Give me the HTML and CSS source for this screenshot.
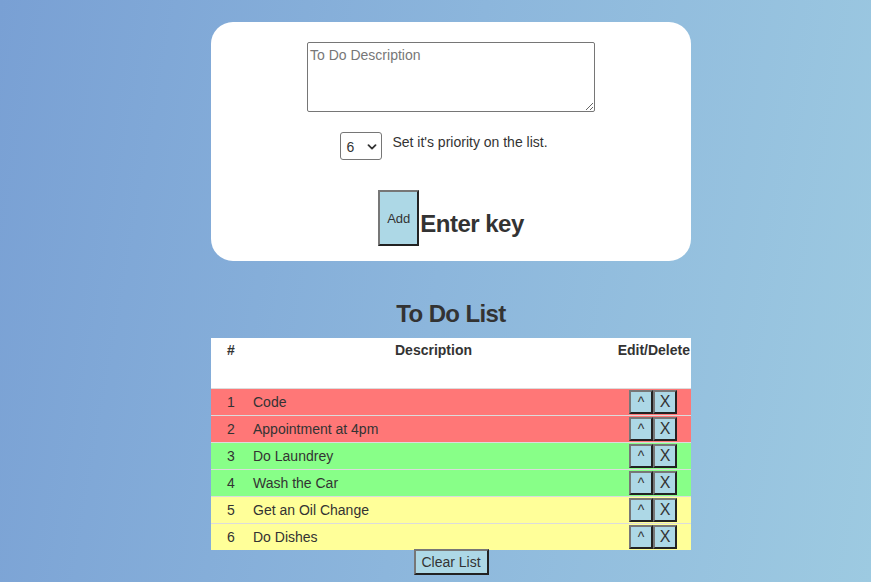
FILE: index.html
```html
<!DOCTYPE html>
<html>
<head>
<meta charset="utf-8">
<link rel="stylesheet" href="styles.css">
</head>
<body>
<main class="page">
  <section class="card">
    <textarea class="desc" placeholder="To Do Description"></textarea>
    <div class="priority-row">
      <div class="select-wrap">
        <select class="priority">
          <option>1</option><option>2</option><option>3</option>
          <option>4</option><option>5</option><option selected>6</option>
        </select>
        <svg class="chev" width="10" height="6" viewBox="0 0 10 6"><path d="M1.5 1.2 L5 4.6 L8.5 1.2" fill="none" stroke="#333" stroke-width="1.8" stroke-linecap="round" stroke-linejoin="round"/></svg>
      </div>
      <span class="priority-label">Set it's priority on the list.</span>
    </div>
    <div class="add-row">
      <button class="add-btn">Add</button>
      <span class="enter">Enter key</span>
    </div>
  </section>

  <h2 class="list-title">To Do List</h2>

  <table class="todo">
    <thead>
      <tr>
        <th class="c-num">#</th>
        <th class="c-desc">Description</th>
        <th class="c-act">Edit/Delete</th>
      </tr>
    </thead>
    <tbody>
      <tr class="p-high"><td class="c-num">1</td><td class="c-desc">Code</td><td class="c-act"><button class="sm">^</button><button class="sm sm-x">X</button></td></tr>
      <tr class="p-high"><td class="c-num">2</td><td class="c-desc">Appointment at 4pm</td><td class="c-act"><button class="sm">^</button><button class="sm sm-x">X</button></td></tr>
      <tr class="p-mid"><td class="c-num">3</td><td class="c-desc">Do Laundrey</td><td class="c-act"><button class="sm">^</button><button class="sm sm-x">X</button></td></tr>
      <tr class="p-mid"><td class="c-num">4</td><td class="c-desc">Wash the Car</td><td class="c-act"><button class="sm">^</button><button class="sm sm-x">X</button></td></tr>
      <tr class="p-low"><td class="c-num">5</td><td class="c-desc">Get an Oil Change</td><td class="c-act"><button class="sm">^</button><button class="sm sm-x">X</button></td></tr>
      <tr class="p-low"><td class="c-num">6</td><td class="c-desc">Do Dishes</td><td class="c-act"><button class="sm">^</button><button class="sm sm-x">X</button></td></tr>
    </tbody>
  </table>
  <div class="clear-row"><button class="clear-btn">Clear List</button></div>
</main>
</body>
</html>
```

FILE: styles.css
```css
html, body {
  margin: 0;
  padding: 0;
}
body {
  min-height: 582px;
  box-sizing: border-box;
  padding-left: 31px;
  background: linear-gradient(100deg, #79a0d4 0%, #8cb6dc 50%, #9dcae1 100%);
  font-family: "Liberation Sans", Arial, sans-serif;
  color: #333;
  overflow: hidden;
}
.page {
  width: 480px;
  margin: 0 auto;
  padding-top: 22px;
}
.card {
  background: #fff;
  border-radius: 22px;
  padding: 20px 0 15px;
  display: flex;
  flex-direction: column;
  align-items: center;
}
.desc {
  display: block;
  box-sizing: border-box;
  width: 288px;
  height: 70px;
  margin: 0;
  padding: 4px 2px 2px;
  border: 1px solid #767676;
  border-radius: 2px;
  font-family: "Liberation Sans", Arial, sans-serif;
  font-size: 14px;
  line-height: 17px;
  color: #333;
  resize: both;
}
.desc::placeholder {
  color: #777;
}
.priority-row {
  display: flex;
  align-items: flex-start;
  margin-top: 20px;
  gap: 10px;
  margin-left: -14px;
}
.select-wrap {
  position: relative;
  width: 42px;
  height: 28px;
}
.priority {
  appearance: none;
  -webkit-appearance: none;
  box-sizing: border-box;
  width: 42px;
  height: 28px;
  margin: 0;
  padding: 2px 0 0 5px;
  border: 1px solid #767676;
  border-radius: 3px;
  background: #fff;
  font-family: "Liberation Sans", Arial, sans-serif;
  font-size: 14px;
  color: #333;
}
.chev {
  position: absolute;
  left: 27px;
  top: 12px;
  pointer-events: none;
}
.priority-label {
  font-size: 14px;
  line-height: 16px;
  margin-top: 2px;
  color: #333;
}
.add-row {
  display: flex;
  align-items: flex-end;
  margin-top: 30px;
  gap: 1px;
}
.add-btn {
  box-sizing: border-box;
  width: 41px;
  height: 56px;
  padding: 0;
  margin: 0;
  background: #add8e6;
  border: 2px solid;
  border-color: #777 #222 #222 #777;
  font-family: "Liberation Sans", Arial, sans-serif;
  font-size: 13px;
  color: #333;
}
.enter {
  font-size: 24px;
  font-weight: bold;
  line-height: 28px;
  letter-spacing: -0.5px;
  padding-bottom: 8px;
  color: #333;
}
.list-title {
  margin: 39px 0 10px;
  font-size: 24px;
  line-height: 28px;
  letter-spacing: -0.6px;
  font-weight: bold;
  text-align: center;
  color: #333;
}
.todo {
  width: 480px;
  border-collapse: collapse;
  table-layout: fixed;
  font-size: 14px;
}
.todo th {
  background: #fff;
  height: 50px;
  padding: 4px 0 0;
  box-sizing: border-box;
  vertical-align: top;
  font-weight: bold;
  line-height: 16px;
  color: #333;
}
.todo th.c-num { width: 40px; text-align: center; }
.todo th.c-desc { text-align: center; }
.todo th.c-act { width: 75px; text-align: right; padding-right: 1px; white-space: nowrap; }
.todo td {
  border-top: 1px solid #dcdcdc;
  height: 26px;
  padding: 0;
  vertical-align: middle;
  line-height: 16px;
  color: #333;
}
.todo td.c-num { text-align: center; }
.todo td.c-desc { padding-left: 2px; }
.todo td.c-act { text-align: center; font-size: 0; white-space: nowrap; padding-right: 1px; }
.p-high td { background: #ff7777; }
.p-mid td { background: #88ff88; }
.p-low td { background: #ffff99; }
.sm {
  box-sizing: border-box;
  width: 24px;
  height: 24px;
  margin: 1px 0 0;
  padding: 0;
  vertical-align: top;
  background: #add8e6;
  border: 2px solid;
  border-color: #777 #222 #222 #777;
  font-family: "Liberation Sans", Arial, sans-serif;
  font-size: 14px;
  line-height: 20px;
  color: #333;
}
.sm-x {
  font-size: 16px;
}
.clear-row {
  display: flex;
  justify-content: center;
  margin-top: -1px;
}
.clear-btn {
  box-sizing: border-box;
  height: 26px;
  width: 75px;
  padding: 0;
  margin: 0;
  background: #add8e6;
  border: 2px solid;
  border-color: #777 #222 #222 #777;
  font-family: "Liberation Sans", Arial, sans-serif;
  font-size: 14px;
  color: #333;
}
```
